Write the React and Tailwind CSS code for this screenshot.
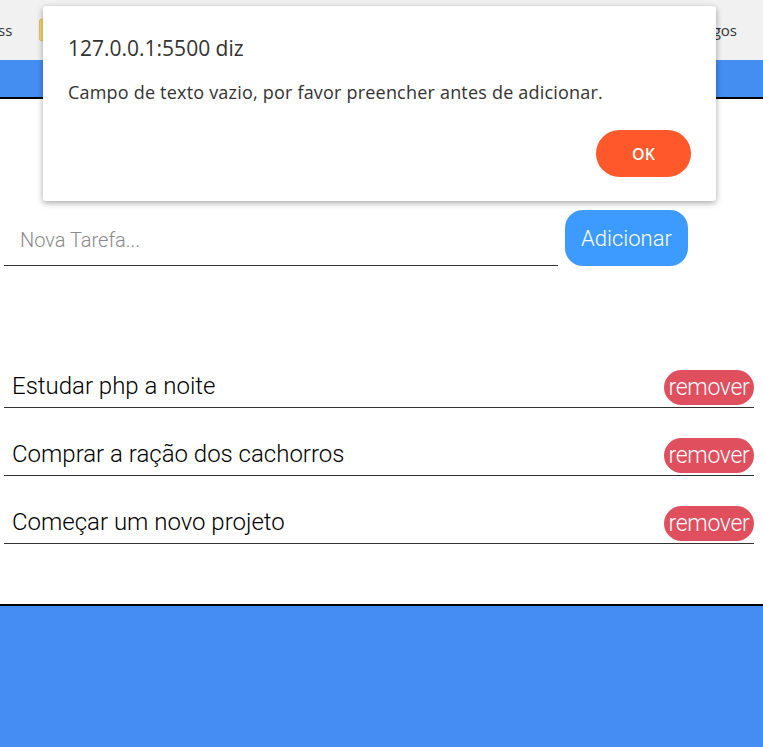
export default function App() {
  const items = [
    "Estudar php a noite",
    "Comprar a ração dos cachorros",
    "Começar um novo projeto",
  ];
  return (
    <div className="relative w-[763px] h-[747px] overflow-hidden bg-white flex flex-col">
      {/* bookmarks bar */}
      <div className="h-[60px] bg-[#f1f1f1] flex items-center justify-between text-[15px] text-[#333] font-['Open_Sans',sans-serif]">
        <div className="flex items-center gap-[27px] -ml-[2px]">
          <span>ss</span>
          <span className="w-[16px] h-[22px] bg-[#f8d775] border border-[#e6c35a] rounded-[2px]"></span>
        </div>
        <span className="mr-[26px]">gos</span>
      </div>
      {/* header */}
      <div className="h-[39px] bg-[#448df1] border-b-2 border-black"></div>
      {/* main */}
      <main className="flex-1 flex flex-col font-['Roboto',sans-serif] font-light">
        <form className="mt-[111px] flex items-stretch pl-[4px] gap-[7px] h-[56px]" onSubmit={(e) => e.preventDefault()}>
          <input
            type="text"
            placeholder="Nova Tarefa..."
            className="w-[554px] border-b border-[#333] px-[16px] pt-[4px] text-[20px] font-light outline-none placeholder:text-[#8a8a8a]"
          />
          <button className="w-[123px] rounded-[18px] bg-[#3d9bff] text-white text-[22px] font-light">Adicionar</button>
        </form>
        <ul className="mt-[105px] pl-[4px] pr-[9px] flex flex-col gap-[31px]">
          {items.map((t) => (
            <li key={t} className="h-[37px] flex items-center justify-between border-b border-[#333] pl-[8px]">
              <span className="text-[24px] font-light text-black leading-none -mt-[6px]">{t}</span>
              <button className="h-[35px] w-[90px] -mt-[3px] rounded-full bg-[#e04f5e] text-white text-[23px] font-light leading-none tracking-[-0.3px]">remover</button>
            </li>
          ))}
        </ul>
      </main>
      {/* footer */}
      <footer className="h-[143px] bg-[#458df2] border-t-2 border-black"></footer>

      {/* alert dialog */}
      <div className="absolute left-[43px] top-[6px] w-[673px] h-[195px] bg-white rounded-[3px] shadow-[0_2px_6px_rgba(0,0,0,0.35)] font-['Open_Sans',sans-serif] text-[#333]">
        <div className="pl-[25px] pt-[28px] text-[21px] leading-[28px]">127.0.0.1:5500 diz</div>
        <div className="pl-[25px] pt-[18px] text-[18px] leading-[24px] tracking-[0.2px]">Campo de texto vazio, por favor preencher antes de adicionar.</div>
        <div className="flex justify-end pr-[25px] pt-[26px]">
          <button className="w-[95px] h-[47px] rounded-full bg-[#ff582b] text-white text-[16px] font-semibold">OK</button>
        </div>
      </div>
    </div>
  );
}
